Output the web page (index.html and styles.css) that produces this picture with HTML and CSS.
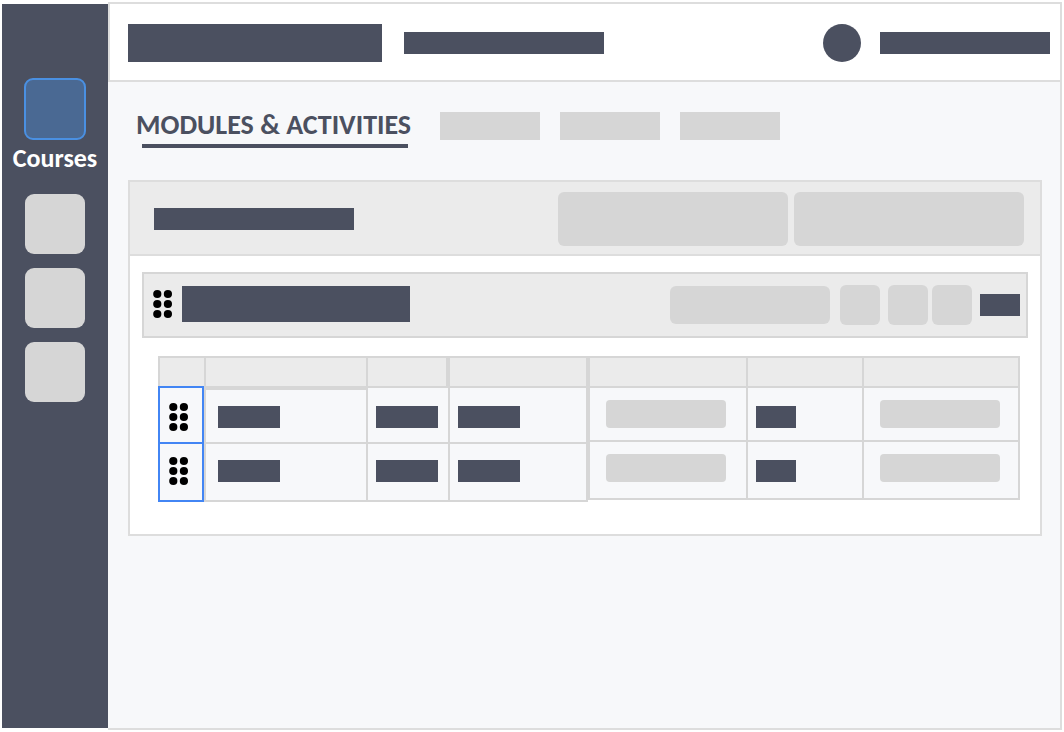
FILE: index.html
```html
<!DOCTYPE html>
<html lang="en">
<head>
    <meta charset="UTF-8">
    <meta name="viewport" content="width=device-width, initial-scale=1.0">
    <title>Modules &amp; Activities</title>
    <link rel="stylesheet" href="styles.css">
</head>
<body>
    <!-- Drag handle shared by the module bar and the rows -->
    <svg class="symbols" aria-hidden="true">
        <symbol id="grip" viewBox="0 0 20 30">
            <circle cx="4.3" cy="5" r="4.1"/>
            <circle cx="14.9" cy="5" r="4.1"/>
            <circle cx="4.3" cy="15" r="4.1"/>
            <circle cx="14.9" cy="15" r="4.1"/>
            <circle cx="4.3" cy="25" r="4.1"/>
            <circle cx="14.9" cy="25" r="4.1"/>
        </symbol>
    </svg>

    <div class="app">
        <nav class="sidebar">
            <a class="nav-item active" href="#">
                <span class="nav-icon"></span>
                <span class="nav-label">Courses</span>
            </a>
            <a class="nav-item" href="#" aria-label="Calendar"><span class="nav-icon"></span></a>
            <a class="nav-item" href="#" aria-label="Messages"><span class="nav-icon"></span></a>
            <a class="nav-item" href="#" aria-label="Settings"><span class="nav-icon"></span></a>
        </nav>

        <div class="main">
            <header class="topbar">
                <div class="bar bar-logo"></div>
                <div class="bar bar-title"></div>
                <div class="user">
                    <div class="avatar"></div>
                    <div class="bar bar-user"></div>
                </div>
            </header>

            <main class="content">
                <div class="tabs">
                    <a class="tab-active" href="#">MODULES &amp; ACTIVITIES</a>
                    <a class="tab" href="#" aria-label="Members"></a>
                    <a class="tab" href="#" aria-label="Grades"></a>
                    <a class="tab" href="#" aria-label="Reports"></a>
                </div>

                <section class="panel">
                    <div class="panel-header">
                        <div class="bar bar-title"></div>
                        <div class="panel-actions">
                            <button class="block action" type="button" aria-label="Add module"></button>
                            <button class="block action" type="button" aria-label="Add activity"></button>
                        </div>
                    </div>

                    <div class="panel-body">
                        <div class="module">
                            <div class="module-title">
                                <button class="handle" type="button" aria-label="Move module"><svg class="grip"><use href="#grip"/></svg></button>
                                <div class="bar bar-module"></div>
                            </div>
                            <div class="module-tools">
                                <button class="block tool-wide" type="button" aria-label="Module status"></button>
                                <button class="block tool tool-first" type="button" aria-label="Add"></button>
                                <div class="tool-pair">
                                    <button class="block tool" type="button" aria-label="Edit"></button>
                                    <button class="block tool" type="button" aria-label="Delete"></button>
                                </div>
                                <div class="bar bar-short"></div>
                            </div>
                        </div>

                        <div class="tables">
                            <table class="table table-left">
                                <colgroup>
                                    <col class="col-handle">
                                    <col class="col-name">
                                    <col class="col-type">
                                    <col>
                                </colgroup>
                                <thead>
                                    <tr><th></th><th></th><th class="th-type"></th><th></th></tr>
                                </thead>
                                <tbody>
                                    <tr>
                                        <td class="selected"><button class="handle" type="button" aria-label="Move row 1"><svg class="grip"><use href="#grip"/></svg></button></td>
                                        <td class="name"><div class="bar bar-cell"></div></td>
                                        <td><div class="bar bar-cell"></div></td>
                                        <td><div class="bar bar-cell"></div></td>
                                    </tr>
                                    <tr>
                                        <td class="selected"><button class="handle" type="button" aria-label="Move row 2"><svg class="grip"><use href="#grip"/></svg></button></td>
                                        <td class="name"><div class="bar bar-cell"></div></td>
                                        <td><div class="bar bar-cell"></div></td>
                                        <td><div class="bar bar-cell"></div></td>
                                    </tr>
                                </tbody>
                            </table>

                            <table class="table table-right">
                                <colgroup>
                                    <col class="col-status">
                                    <col class="col-count">
                                    <col>
                                </colgroup>
                                <thead>
                                    <tr><th></th><th></th><th></th></tr>
                                </thead>
                                <tbody>
                                    <tr>
                                        <td class="field"><button class="block" type="button" aria-label="Status, row 1"></button></td>
                                        <td><div class="bar bar-short"></div></td>
                                        <td class="field"><button class="block" type="button" aria-label="Actions, row 1"></button></td>
                                    </tr>
                                    <tr>
                                        <td class="field"><button class="block" type="button" aria-label="Status, row 2"></button></td>
                                        <td><div class="bar bar-short"></div></td>
                                        <td class="field"><button class="block" type="button" aria-label="Actions, row 2"></button></td>
                                    </tr>
                                </tbody>
                            </table>
                        </div>
                    </div>
                </section>
            </main>
        </div>
    </div>
</body>
</html>
```

FILE: styles.css
```css
* {
    box-sizing: border-box;
}
body {
    margin: 0;
    padding: 2px;
    background-color: #fff;
    color: #4b5060;
    font-family: Carlito, Lato, sans-serif;
}
a {
    color: inherit;
    text-decoration: none;
}
button {
    display: block;
    border: none;
    padding: 0;
    cursor: pointer;
}
.symbols {
    display: none;
}
.app {
    display: flex;
    min-height: calc(100vh - 4px);
}

/* Placeholders */
.bar {
    height: 22px;
    background-color: #4b5060;
}
.bar-logo {
    width: 254px;
    height: 38px;
}
.bar-title {
    width: 200px;
}
.bar-user {
    width: 170px;
}
.bar-module {
    width: 228px;
    height: 36px;
}
.bar-cell {
    width: 62px;
}
.bar-short {
    width: 40px;
}
.block {
    background-color: #d6d6d6;
    border-radius: 6px;
}

/* Sidebar */
.sidebar {
    display: flex;
    flex-direction: column;
    align-items: center;
    gap: 14px;
    flex: 0 0 106px;
    margin: 2px 0;
    padding-top: 74px;
    background-color: #4b5060;
}
.nav-icon {
    display: block;
    width: 60px;
    height: 60px;
    border-radius: 9px;
    background-color: #d6d6d6;
}
.active {
    display: flex;
    flex-direction: column;
    align-items: center;
    height: 102px;
}
.active .nav-icon {
    width: 62px;
    height: 62px;
    border: 2px solid #4a90e2;
    background-color: #4a6993;
}
.nav-label {
    margin-top: 4px;
    color: #fff;
    font-size: 26px;
    font-weight: bold;
    line-height: 28px;
}

/* Header */
.main {
    flex: 1;
    min-width: 0;
    border: 2px solid #ddd;
    border-left: none;
    background-color: #f7f8fa;
}
.topbar {
    display: flex;
    align-items: center;
    gap: 22px;
    height: 78px;
    padding: 2px 10px 0 18px;
    border-left: 2px solid #ddd;
    border-bottom: 2px solid #ddd;
    background-color: #fff;
}
.user {
    display: flex;
    align-items: center;
    gap: 19px;
    margin-left: auto;
}
.avatar {
    width: 38px;
    height: 38px;
    border-radius: 50%;
    background-color: #4b5060;
}

/* Tabs */
.content {
    padding: 30px 18px 30px 20px;
}
.tabs {
    display: flex;
    gap: 20px;
    height: 68px;
    padding-left: 8px;
}
.tab-active {
    position: relative;
    width: 284px;
    height: 36px;
    font-size: 28px;
    font-weight: bold;
    line-height: 26px;
    white-space: nowrap;
}
.tab-active::after {
    content: "";
    position: absolute;
    left: 6px;
    bottom: 0;
    width: 266px;
    height: 4px;
    background-color: #4b5060;
}
.tab {
    width: 100px;
    height: 28px;
    background-color: #d6d6d6;
}

/* Panel */
.panel {
    border: 2px solid #ddd;
    background-color: #fff;
}
.panel-header {
    display: flex;
    align-items: center;
    justify-content: space-between;
    height: 74px;
    padding: 2px 16px 0 24px;
    border-bottom: 2px solid #ddd;
    background-color: #ebebeb;
}
.panel-actions {
    display: flex;
    gap: 6px;
}
.action {
    width: 230px;
    height: 54px;
}
.panel-body {
    padding: 16px 12px 32px;
}

/* Module bar */
.module {
    display: flex;
    align-items: center;
    justify-content: space-between;
    height: 66px;
    padding: 0 6px 0 9px;
    border: 2px solid #d6d6d6;
    background-color: #ebebeb;
}
.module-title {
    display: flex;
    align-items: center;
    gap: 9px;
    padding-bottom: 2px;
}
.handle {
    background: none;
}
.grip {
    display: block;
    width: 20px;
    height: 30px;
}
.module-tools {
    display: flex;
    align-items: center;
}
.tool-wide {
    width: 160px;
    height: 38px;
    margin-right: 10px;
}
.tool {
    width: 40px;
    height: 40px;
}
.tool-first {
    margin-right: 8px;
}
.tool-pair {
    display: flex;
    gap: 4px;
    margin-right: 8px;
}

/* Tables */
.tables {
    display: flex;
    align-items: flex-start;
    padding: 18px 8px 0 16px;
}
.table {
    border-spacing: 0;
    table-layout: fixed;
}
.table-left {
    width: 430px;
    flex: 1 1 430px;
}
.table-right {
    width: 432px;
    flex: 1 1 432px;
}
.col-handle {
    width: 46px;
}
.col-name {
    width: 162px;
}
.col-type {
    width: 82px;
}
.col-status {
    width: 158px;
}
.col-count {
    width: 116px;
}
th, td {
    border-top: 2px solid #d6d6d6;
    border-left: 2px solid #d6d6d6;
    vertical-align: top;
}
th {
    height: 30px;
    padding: 0;
    background-color: #ebebeb;
}
td {
    height: 56px;
    padding: 18px 8px 0;
    background-color: #f7f8fa;
}
th:last-child, td:last-child {
    border-right: 2px solid #d6d6d6;
}
.th-type {
    border-right: 2px solid #d6d6d6;
}
tr:last-child td {
    height: 60px;
    border-bottom: 2px solid #d6d6d6;
}
.table-left tr:last-child td {
    padding-top: 16px;
}
.table-right td {
    height: 54px;
}
td.name {
    padding-left: 12px;
}
tr:first-child td.name {
    padding-top: 16px;
    border-top-width: 4px;
}
td.selected,
.table-left tr:last-child td.selected {
    padding: 14px 0 0 9px;
    border: 2px solid #4285f4;
}
.table-left tr:last-child td.selected {
    padding-top: 12px;
}
.table-left tr:first-child td.selected {
    border-bottom: none;
}
td.field {
    padding: 12px 16px 0;
}
td.field .block {
    width: 120px;
    max-width: 100%;
    height: 28px;
    border-radius: 4px;
}
```
